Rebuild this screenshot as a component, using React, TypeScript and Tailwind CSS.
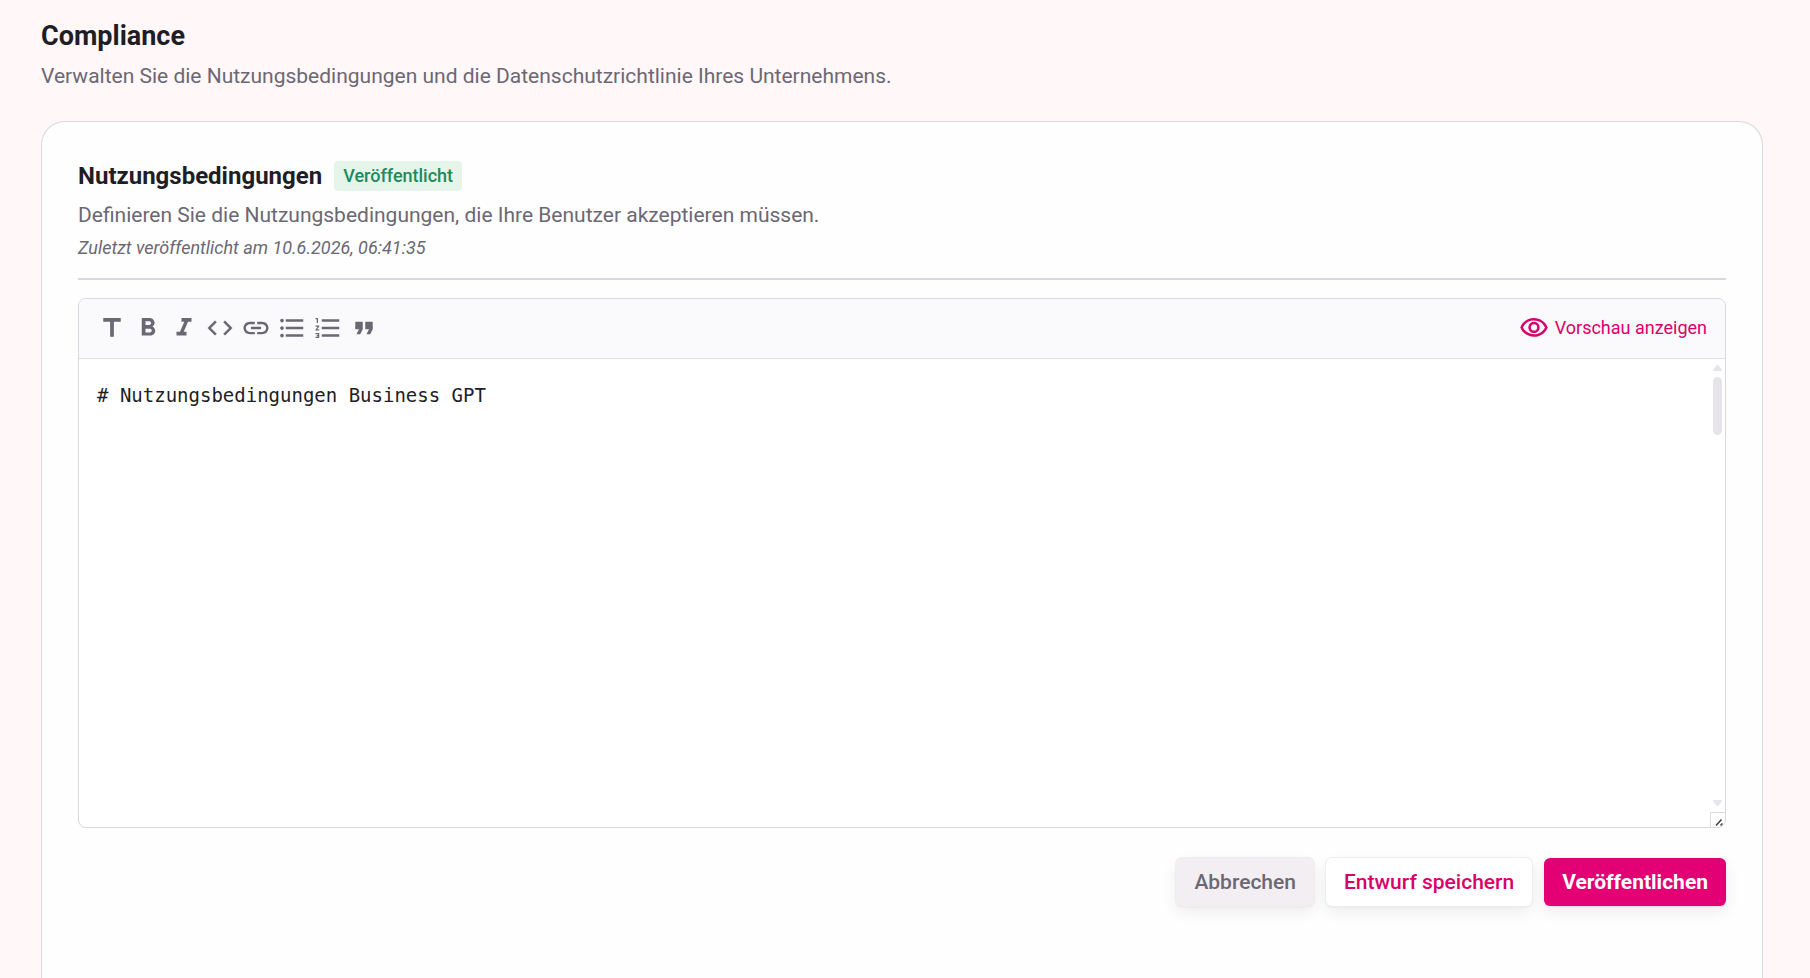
import React, { useState } from 'react';
import {
  MdTitle,
  MdFormatBold,
  MdFormatItalic,
  MdCode,
  MdLink,
  MdFormatListBulleted,
  MdFormatListNumbered,
  MdFormatQuote,
  MdOutlineVisibility,
} from 'react-icons/md';

const tools = [
  { label: 'Überschrift', Icon: MdTitle },
  { label: 'Fett', Icon: MdFormatBold },
  { label: 'Kursiv', Icon: MdFormatItalic },
  { label: 'Code', Icon: MdCode },
  { label: 'Link', Icon: MdLink },
  { label: 'Liste', Icon: MdFormatListBulleted },
  { label: 'Nummerierte Liste', Icon: MdFormatListNumbered },
  { label: 'Zitat', Icon: MdFormatQuote },
];

function Toolbar() {
  return (
    <div className="flex h-[60px] items-center justify-between border-b border-[#dfdfe4] bg-[#fafafc] px-[18px] pb-px">
      <div className="flex items-center gap-1.5 text-[#6b6874]">
        {tools.map(({ label, Icon }) => (
          <button key={label} type="button" aria-label={label}>
            <Icon size={30} />
          </button>
        ))}
      </div>
      <button type="button" className="flex items-center gap-1.5 text-lg text-[#d9006c]">
        <MdOutlineVisibility size={30} />
        Vorschau anzeigen
      </button>
    </div>
  );
}

function ScrollTrack() {
  return (
    <div className="flex w-[15px] shrink-0 flex-col items-end">
      <div className="flex flex-1 flex-col items-center px-[3px] pt-1.5 pb-1.5">
        <svg width="9" height="6" viewBox="0 0 9 6" fill="#e7e5eb">
          <path d="M4.5 0 Q5.3 0 6 1 L9 5 V6 H0 V5 L3 1 Q3.7 0 4.5 0Z" />
        </svg>
        <div className="mt-1.5 h-[58px] w-[9px] rounded-full bg-[#e7e5eb]" />
        <svg className="mt-auto" width="9" height="6" viewBox="0 0 9 6" fill="#e7e5eb">
          <path d="M4.5 6 Q5.3 6 6 5 L9 1 V0 H0 V1 L3 5 Q3.7 6 4.5 6Z" />
        </svg>
      </div>
      <svg width="15" height="15" viewBox="0 0 15 15" fill="none">
        <path d="M0.5 15V0.5H15" stroke="#dadae0" />
        <path d="M6 13.5L11.5 7.5M10.5 13.5L12.5 11.5" stroke="#444" strokeWidth="1.6" />
      </svg>
    </div>
  );
}

export default function App() {
  const [text, setText] = useState('# Nutzungsbedingungen Business GPT');

  return (
    <div className="flex min-h-screen flex-col bg-[#fff7f8] pt-4 pr-[47px] pl-[41px] font-['Roboto',sans-serif] text-[#1f1e26]">
      <h1 className="text-[27px] leading-10 font-bold">Compliance</h1>
      <p className="mt-1 text-[21px] leading-8 text-[#6b6874]">
        Verwalten Sie die Nutzungsbedingungen und die Datenschutzrichtlinie Ihres Unternehmens.
      </p>

      <section className="mt-[29px] flex-1 rounded-t-3xl border border-b-0 border-[#d9d8df] bg-[#fefefe] px-9 pt-9">
        <div className="flex items-center gap-3">
          <h2 className="text-2xl leading-9 font-bold">Nutzungsbedingungen</h2>
          <span className="rounded bg-[#e5f5ea] px-[9px] text-lg leading-[30px] font-medium text-[#1f8a5b]">
            Veröffentlicht
          </span>
        </div>
        <p className="mt-1 text-[21px] leading-[34px] text-[#6b6874]">
          Definieren Sie die Nutzungsbedingungen, die Ihre Benutzer akzeptieren müssen.
        </p>
        <p className="mt-0.5 text-lg leading-7 text-[#6b6874] italic">Zuletzt veröffentlicht am 10.6.2026, 06:41:35</p>
        <hr className="mt-4 border-t-2 border-[#d9d8df]" />

        <div className="mt-[18px] overflow-hidden rounded-lg border border-[#d9d8df] bg-white">
          <Toolbar />
          <div className="flex h-[468px]">
            <textarea
              aria-label="Nutzungsbedingungen"
              value={text}
              onChange={(e) => setText(e.target.value)}
              className="flex-1 resize-none px-[18px] pt-[22px] font-['DejaVu_Sans_Mono',monospace] text-[19px] leading-7 outline-none"
            />
            <ScrollTrack />
          </div>
        </div>

        <div className="mt-[30px] flex justify-end gap-3 text-[21px] leading-[48px] font-medium">
          <button
            type="button"
            className="rounded-md bg-[#f3eef2] px-[18px] text-[#6b6874] shadow-[0_0_0_1px_#f0ebef,0_1px_2px_#00000014,0_6px_16px_#00000012]"
          >
            Abbrechen
          </button>
          <button
            type="button"
            className="rounded-md bg-white px-[18px] text-[#d9006c] shadow-[0_0_0_1px_#f0ebef,0_1px_2px_#00000014,0_6px_16px_#00000012]"
          >
            Entwurf speichern
          </button>
          <button
            type="button"
            className="rounded-md bg-[#e20074] px-[18px] font-bold text-white shadow-[0_1px_2px_#00000014,0_6px_16px_#00000012]"
          >
            Veröffentlichen
          </button>
        </div>
      </section>
    </div>
  );
}
